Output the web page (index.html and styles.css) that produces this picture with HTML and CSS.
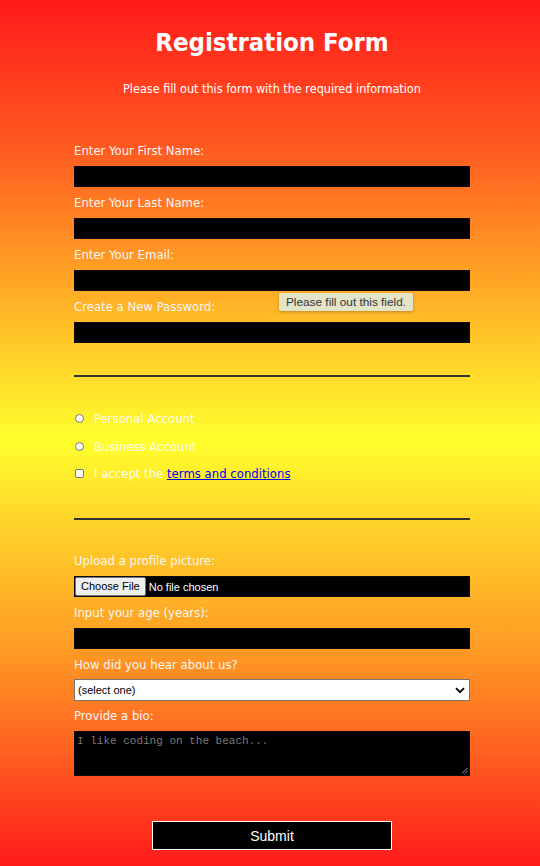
FILE: index.html
```html
<!DOCTYPE html>
<html lang="en">
<head>
<meta charset="utf-8">
<title>Registration Form</title>
<link rel="stylesheet" href="styles.css">
</head>
<body>
<h1 class="title">Registration Form</h1>
<p class="subtitle">Please fill out this form with the required information</p>
<form class="form">
  <fieldset class="group group-text">
    <label class="field-label">Enter Your First Name:</label>
    <input class="text-input" type="text">
    <label class="field-label">Enter Your Last Name:</label>
    <input class="text-input" type="text">
    <label class="field-label">Enter Your Email:</label>
    <input class="text-input" type="text">
    <div class="pw-wrap">
      <label class="field-label">Create a New Password:</label>
      <span class="tooltip">Please fill out this field.</span>
    </div>
    <input class="text-input" type="password">
  </fieldset>
  <fieldset class="group group-choice">
    <label class="choice"><span class="radio"></span><span class="choice-text">Personal Account</span></label>
    <label class="choice"><span class="radio"></span><span class="choice-text">Business Account</span></label>
    <label class="choice"><span class="checkbox"></span><span class="choice-text">I accept the <a class="link" href="#">terms and conditions</a></span></label>
  </fieldset>
  <fieldset class="group group-extra">
    <label class="field-label">Upload a profile picture:</label>
    <div class="file-input"><span class="file-btn">Choose File</span><span class="file-text">No file chosen</span></div>
    <label class="field-label">Input your age (years):</label>
    <input class="text-input" type="text">
    <label class="field-label field-label-tight">How did you hear about us?</label>
    <div class="select"><span class="select-text">(select one)</span>
      <svg class="chev" width="10" height="7" viewBox="0 0 10 7"><path d="M1 1.2 L5 5.2 L9 1.2" fill="none" stroke="#000" stroke-width="1.8"/></svg>
    </div>
    <label class="field-label">Provide a bio:</label>
    <div class="bio"><span class="bio-ph">I like coding on the beach...</span>
      <svg class="grip" width="7" height="7" viewBox="0 0 7 7"><path d="M6.5 1 L1 6.5 M6.5 4 L4 6.5" stroke="#aaa" stroke-width="0.9"/></svg>
    </div>
  </fieldset>
  <div class="submit-row"><button class="submit" type="button">Submit</button></div>
</form>
</body>
</html>
```
FILE: styles.css
```css
* { box-sizing: border-box; }
html, body { margin: 0; padding: 0; }
body {
  width: 540px;
  height: 866px;
  overflow: hidden;
  padding-left: 4px;
  font-family: "DejaVu Sans Condensed", "DejaVu Sans", sans-serif;
  color: #f5f6f7;
  background: linear-gradient(180deg, #ff1a1a 0%, #ff5a20 17%, #ff9a24 30%, #ffd52a 42%, #ffff2d 51%, #ffd52a 60%, #ff9a24 75%, #ff5a20 88%, #ff1a1a 100%);
}
.title {
  margin: 0;
  padding-top: 24px;
  height: 60px;
  line-height: 36px;
  font-size: 25.5px;
  font-weight: bold;
  text-align: center;
  color: #fff;
}
.subtitle {
  margin: 0;
  padding-top: 21px;
  height: 60px;
  line-height: 16px;
  font-size: 12.5px;
  text-align: center;
  color: #fff;
}
.form {
  width: 396px;
  margin: 0 auto;
  padding-top: 22px;
}
.group {
  margin: 0;
  padding: 0;
  border: none;
  min-width: 0;
}
.group-text {
  border-bottom: 2px solid #333;
  padding-bottom: 32px;
}
.field-label {
  display: block;
  height: 16px;
  padding-top: 1px;
  line-height: 16px;
  font-size: 13px;
  margin-bottom: 8px;
}
.field-label-tight { margin-bottom: 7px; }
.text-input {
  display: block;
  width: 100%;
  height: 21px;
  margin: 0 0 7px 0;
  background: #000;
  border: 1px solid #0a0a14;
  color: #fff;
  outline: none;
}
.group-text .text-input:last-child { margin-bottom: 0; }
.pw-wrap { position: relative; }
.tooltip {
  position: absolute;
  left: 205px;
  top: -5px;
  height: 18px;
  line-height: 18px;
  padding: 0 7px;
  font-family: "Liberation Sans", Arial, sans-serif;
  font-size: 11.8px;
  color: #333;
  background: #e3e4c8;
  border-radius: 2px;
  box-shadow: 0 1px 3px rgba(0,0,0,0.25);
}
.group-choice {
  border-bottom: 2px solid #333;
  padding-top: 27px;
  padding-bottom: 32px;
}
.choice {
  display: flex;
  align-items: center;
  height: 28px;
  font-size: 13px;
}
.choice:last-child { height: 26px; }
.radio {
  width: 9px;
  height: 9px;
  border-radius: 50%;
  background: #fff;
  border: 1px solid #767676;
  margin: 0 10px 0 1px;
  flex: none;
}
.checkbox {
  width: 9px;
  height: 9px;
  border-radius: 2px;
  background: #fff;
  border: 1px solid #767676;
  margin: 0 10px 0 1px;
  flex: none;
}
.choice-text { color: #fbfbf0; }
.link { color: #0000ee; text-decoration: underline; }
.group-extra { padding-top: 32px; }
.file-input {
  display: flex;
  align-items: center;
  height: 21px;
  margin-bottom: 7px;
  background: #000;
  border: 1px solid #0a0a14;
  font-family: "Liberation Sans", Arial, sans-serif;
  font-size: 11px;
  color: #fff;
}
.file-btn {
  height: 19px;
  line-height: 17px;
  padding: 0 5px;
  background: #efefef;
  border: 1px solid #767676;
  border-radius: 2px;
  color: #000;
  margin-right: 3px;
}
.select {
  display: flex;
  align-items: center;
  justify-content: space-between;
  height: 22px;
  margin-bottom: 6px;
  background: #fff;
  border: 1px solid #767676;
  padding: 0 4px 0 3px;
  font-family: "Liberation Sans", Arial, sans-serif;
  font-size: 11px;
  color: #000;
}
.bio {
  position: relative;
  height: 45px;
  background: #000;
  border: 1px solid #0a0a14;
  padding: 2px 2px;
}
.bio-ph {
  display: block;
  font-family: "Liberation Mono", "DejaVu Sans Mono", monospace;
  font-size: 11px;
  line-height: 14px;
  color: #7a7a7a;
}
.grip { position: absolute; right: 1px; bottom: 1px; }
.submit-row {
  display: flex;
  justify-content: center;
  padding-top: 45px;
}
.submit {
  width: 240px;
  height: 29px;
  background: #000;
  border: 1px solid #fff;
  color: #fff;
  font-family: "Liberation Sans", Arial, sans-serif;
  font-size: 14px;
}
```
